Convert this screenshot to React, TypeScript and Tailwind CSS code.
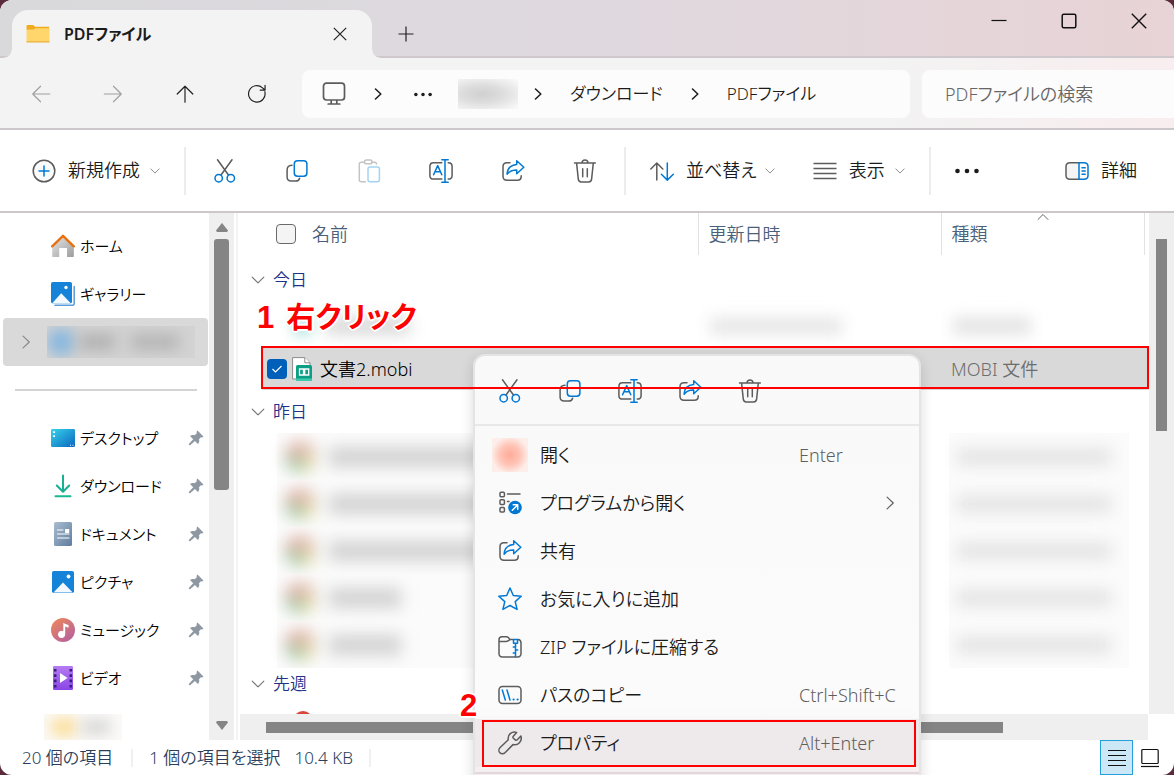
import React from "react";

type IconProps = { className?: string };

const GRAY = "#5c5c5c";
const BLUE = "#0078d4";

function Svg({ children, className = "size-6" }: { children: React.ReactNode; className?: string }) {
  return (
    <svg viewBox="0 0 24 24" fill="none" strokeWidth="1.5" strokeLinecap="round" strokeLinejoin="round" className={"shrink-0 " + className} aria-hidden="true">
      {children}
    </svg>
  );
}

function CutIcon() {
  return (
    <Svg>
      <path d="M4.5 .8 15.3 15.8M19 .8 8.2 15.8" stroke={GRAY} />
      <circle cx="5.7" cy="19.2" r="3.7" stroke={BLUE} />
      <circle cx="17.8" cy="19.2" r="3.7" stroke={BLUE} />
    </Svg>
  );
}

function CopyIcon() {
  return (
    <Svg>
      <path d="M7 6.3C3.6 6.5 2.1 8 2.1 11v7c0 2.8 1.6 4 4.2 4h4.5c2.2 0 3.3-.8 3.8-2.8" stroke={GRAY} />
      <rect x="9.3" y="1.8" width="12.6" height="15.4" rx="3.2" stroke={BLUE} />
    </Svg>
  );
}

function PasteIcon() {
  return (
    <Svg>
      <path d="M7.5 3.2H4.3c-1.3 0-2 .7-2 2v15.6c0 1.2.7 2 2 2h4.2M15 3.2h2.6c1.2 0 1.8.6 1.9 1.8" stroke="#c4c4c4" />
      <rect x="7.5" y="1" width="7.5" height="3.8" rx="1.9" stroke="#c4c4c4" />
      <rect x="11" y="8" width="11.4" height="14.8" rx="2" stroke="#a3d3f2" />
    </Svg>
  );
}

function RenameIcon() {
  return (
    <Svg>
      <path d="M12.8 3.7H4.6C2 3.7.9 5 .9 7.4v9c0 2.4 1.2 3.7 3.7 3.7h8.2M19.2 3.7c2.7 0 3.9 1.3 3.9 3.7v9c0 2.4-1.2 3.7-3.9 3.7" stroke={GRAY} />
      <path d="M4.6 15.8 8.7 6.6l4.1 9.2M6 12.8h5.4M16 1v22M12.8.8h6.4M12.8 23.2h6.4" stroke={BLUE} />
    </Svg>
  );
}

function ShareIcon() {
  return (
    <Svg>
      <path d="M9 3.7H6c-2.6 0-4 1.3-4 3.9v9.6c0 2.6 1.4 4 4 4h10.3c2.5 0 3.8-1.4 3.9-3.6v-.9" stroke={GRAY} />
      <path d="M15.7 1.8 22.8 8.3l-7.1 6.4V11c-4.4-.2-7.2 1-9.6 4.2C6.4 9.5 9.6 6 15.7 5.5Z" stroke={BLUE} />
    </Svg>
  );
}

function TrashIcon() {
  return (
    <Svg>
      <path d="M1.5 4h20.8M3.6 4.2l1.7 16c.2 1.7 1.2 2.7 2.9 2.7h7.5c1.7 0 2.7-1 2.9-2.7l1.7-16M9 3.8c.1-1.9 1.3-2.9 3-2.9s2.9 1 3 2.9M9.7 9.7v8M14.3 9.7v8" stroke={GRAY} />
    </Svg>
  );
}

function Chevron({ dir, className = "h-3 w-3" }: IconProps & { dir: "down" | "right" | "up" }) {
  const d = dir === "down" ? "M1 3.5 6 8.5l5-5" : dir === "right" ? "M3.5 1 8.8 6l-5.3 5" : "M1 8.5 6 3.5l5 5";
  return (
    <svg viewBox="0 0 12 12" fill="none" stroke="currentColor" strokeLinecap="round" strokeLinejoin="round" className={"shrink-0 " + className} aria-hidden="true">
      <path d={d} />
    </svg>
  );
}

function PlusCircleIcon() {
  return (
    <Svg>
      <circle cx="12" cy="12" r="10.8" stroke={GRAY} fill="#fafafa" />
      <path d="M12 7v10M7 12h10" stroke={BLUE} />
    </Svg>
  );
}

function SortIcon() {
  return (
    <Svg>
      <path d="M6.8 21V4.2M.8 10l6-6 6 6" stroke={GRAY} />
      <path d="M17.3 4v17M11.4 15.2l5.9 5.9 6-5.9" stroke={BLUE} />
    </Svg>
  );
}

function LinesIcon() {
  return (
    <Svg>
      <path d="M.5 4.5h23M.5 9.5h23M.5 14.5h23M.5 19.5h23" stroke={GRAY} strokeLinecap="butt" />
    </Svg>
  );
}

function DetailsIcon() {
  return (
    <Svg>
      <path d="M14 3.8H5C2.3 3.8 1 5.1 1 7.6v9c0 2.5 1.3 3.7 4 3.7h9" stroke={GRAY} fill="#f5f5f5" />
      <path d="M14 3.8h5c2.7 0 4 1.3 4 3.8v9c0 2.5-1.3 3.7-4 3.7h-5ZM17 8.8h3.2M17 12h3.2M17 15.3h3.2" stroke={BLUE} />
    </Svg>
  );
}

function OpenWithIcon() {
  return (
    <Svg>
      <path d="M9.5 3h12.5M9.5 10.5h1.5" stroke={GRAY} />
      <rect x="2" y="1.2" width="4.4" height="4.6" rx="1" stroke={GRAY} />
      <rect x="2" y="8.8" width="4.4" height="4.6" rx="1" stroke={GRAY} />
      <rect x="2" y="16.4" width="4.4" height="4.6" rx="1" stroke={GRAY} />
      <circle cx="17" cy="16.5" r="6.8" fill={BLUE} />
      <path d="m14.3 19.2 5-5M15.2 13.8h4.5v4.5" stroke="#fff" />
    </Svg>
  );
}

function StarIcon() {
  return (
    <Svg>
      <path d="m12 1 3.3 7.5 7.9.8-6 5.3 1.9 7.8L12 18.5l-7.1 3.9 1.9-7.8-6-5.3 7.9-.8Z" stroke={BLUE} />
    </Svg>
  );
}

function ZipIcon() {
  return (
    <Svg>
      <path d="M15 4.5h-3L10 2.3C9.6 2 9 1.8 8.5 1.8H4C2 1.8 1 2.9 1 4.8v13.7c0 2.2 1.2 3.4 3.4 3.4h15.2c2.2 0 3.4-1.2 3.4-3.4V8c0-2-1-3.4-3-3.5M1.3 6.5h7c1.5 0 2-.5 3.7-2" stroke={GRAY} />
      <path d="M15.5 4.6h4v3.6h-4ZM17.5 8.2v13.5M15.3 12h2.2M17.5 15h2.2M15.3 18h2.2" stroke={BLUE} />
    </Svg>
  );
}

function PathCopyIcon() {
  return (
    <Svg>
      <rect x="1" y="3.5" width="22" height="17" rx="3.5" stroke={GRAY} />
      <path d="M4.3 7l3 10M9 7l3 10" stroke={BLUE} />
      <path d="M15.5 16.5h.2M19.5 16.5h.2" stroke={BLUE} strokeWidth="2" />
    </Svg>
  );
}

function WrenchIcon() {
  return (
    <Svg>
      <path d="M18.6 1.5C13.9-.1 9.3 3.8 10.3 8.8L1.9 16.7c-1.3 1.4-1.3 3.7 0 5 1.4 1.4 3.7 1.4 5.1 0l8-8.1c5 1.2 9.6-3.3 7.9-8.6l-3.6 3.7c-.6.6-1.4.7-2 .2l-1.9-1.6c-.7-.6-.7-1.5-.1-2.1Z" stroke={GRAY} />
    </Svg>
  );
}

function FolderIcon() {
  return (
    <svg viewBox="0 0 24 18" className="h-[18px] w-6 shrink-0" aria-hidden="true">
      <path d="M1.5 0h5.7L9 1.8h14v3H.5V1.5C.5.6.9 0 1.5 0Z" fill="#f2ab1c" />
      <path d="M.5 5h6.8l2-1.7H23.5V17H.5Z" fill="#ffd66b" />
      <path d="M.5 16.2h23V17.5H.5Z" fill="#eab23a" />
    </svg>
  );
}

function MonitorIcon() {
  return (
    <Svg>
      <path d="M4.5 1.2h15c2 0 3 1.1 3 3V15c0 2-1 3-3 3h-15c-2 0-3-1-3-3V4.2c0-1.9 1-3 3-3ZM9.2 18.2v3.6M14.8 18.2v3.6M6.2 22h11.6" stroke={GRAY} strokeWidth="1.7" />
    </Svg>
  );
}

function HomeIcon() {
  return (
    <Svg>
      <defs>
        <linearGradient id="wall" x1="0" y1="0" x2="1" y2="1">
          <stop stopColor="#e6e6e6" />
          <stop offset="1" stopColor="#9c9c9c" />
        </linearGradient>
      </defs>
      <path d="M12 2.5 22.8 12v10.5c0 .3-.3.5-.5.5H16v-9H8.2v9H1.7c-.3 0-.5-.2-.5-.5V12Z" fill="url(#wall)" />
      <path d="M1.2 12.3 12 1.8l10.8 10.5" stroke="#e8700f" strokeWidth="2.4" />
    </Svg>
  );
}

function GalleryIcon() {
  return (
    <Svg>
      <path d="M4 23.3h17.5c1 0 1.7-.8 1.7-1.7V4.5" stroke="#5b9bd8" strokeWidth="1.5" />
      <rect x="0" y="0" width="21" height="21.5" rx="1.8" fill="#1583d8" />
      <path d="m1 21.5 9.2-10.3L20 21.5Z" fill="#f4f9ff" />
      <circle cx="15" cy="5.5" r="1.7" fill="#fff" />
    </Svg>
  );
}

function DesktopIcon() {
  return (
    <Svg>
      <defs>
        <linearGradient id="desk" x1="0" y1="0" x2="1" y2="1">
          <stop stopColor="#37d3ea" />
          <stop offset="1" stopColor="#0a66c0" />
        </linearGradient>
      </defs>
      <rect x="0" y="3" width="24" height="18" rx="1.2" fill="url(#desk)" />
      <path d="M2.2 5.2h1.8V7H2.2ZM2.2 9.2h1.8V11H2.2ZM19 18.8h1v1h-1ZM21.5 18.8h1v1h-1Z" fill="#fff" />
    </Svg>
  );
}

function DownloadIcon() {
  return (
    <Svg>
      <path d="M12 1.5v15.8M5.8 11.5l6.2 6.2 6.2-6.2" stroke="#1aae92" strokeWidth="2" />
      <path d="M4.5 22.3h15" stroke="#19b890" strokeWidth="2" />
    </Svg>
  );
}

function DocumentIcon() {
  return (
    <Svg>
      <defs>
        <linearGradient id="doc" x1="0" y1="0" x2="1" y2="1">
          <stop stopColor="#a9bdd0" />
          <stop offset="1" stopColor="#5f7d9e" />
        </linearGradient>
      </defs>
      <rect x="3" y="0" width="18" height="24" rx="1.5" fill="url(#doc)" />
      <path d="M6.5 8h5.5M6.5 12h11.5M6.5 16h11.5" stroke="#fff" strokeWidth="1.2" />
      <rect x="14" y="7" width="4.2" height="4" fill="#fff" />
    </Svg>
  );
}

function PictureIcon() {
  return (
    <Svg>
      <rect x="1" y="1" width="22" height="22" rx="1.8" fill="#1583d8" />
      <path d="M2.5 22.5 12 12.5l9.7 10Z" fill="#f4f9ff" />
      <circle cx="17.5" cy="6.5" r="1.9" fill="#fff" />
    </Svg>
  );
}

function MusicIcon() {
  return (
    <Svg>
      <defs>
        <linearGradient id="music" x1="0" y1="0" x2=".8" y2="1">
          <stop stopColor="#f08a55" />
          <stop offset="1" stopColor="#b561a0" />
        </linearGradient>
      </defs>
      <circle cx="12" cy="12" r="12" fill="url(#music)" />
      <path d="M12.3 4.7c1.5 1.4 3 1.2 5.2 2.2v2.9l-3.3-1.2v7.9a3.6 3.6 0 1 1-1.9-3.3V4.7Z" fill="#fff" />
    </Svg>
  );
}

function VideoIcon() {
  return (
    <Svg>
      <defs>
        <linearGradient id="video" x1="0" y1="0" x2="0" y2="1">
          <stop stopColor="#b57bf2" />
          <stop offset="1" stopColor="#8a46e6" />
        </linearGradient>
      </defs>
      <rect x="2" y="0" width="20" height="24" rx="1.2" fill="url(#video)" />
      <path d="M4.2 3v19M19.8 3v19" stroke="#3b1d7a" strokeWidth="2.6" strokeDasharray="2.6 2.7" strokeLinecap="butt" />
      <path d="m9 7 7.5 5-7.5 5Z" fill="#fff" />
    </Svg>
  );
}

function PinIcon() {
  return (
    <svg viewBox="0 0 16 16" className="size-4 shrink-0" aria-hidden="true">
      <path d="M9.500 .6 15.400 6.500c-.7.900-1.600 1.100-2.500.8L11 9.300c.6 1.800.2 3.500-1 4.600L6.900 10.900 1.800 15.500.6 14.300 5.200 9.300 2 6.100C3.200 4.900 5 4.600 6.700 5.200L8.800 3.200C8.500 2.200 8.700 1.300 9.500.6Z" fill="#8d98a3" />
    </svg>
  );
}

function MobiFileIcon() {
  return (
    <svg viewBox="0 0 20 24" className="h-6 w-5 shrink-0" aria-hidden="true">
      <path d="M.6.6h12.2L18 5.8V22H.6Z" fill="#fff" stroke="#8a8a8a" />
      <path d="M12.8.6V5.8H18" fill="#fff" stroke="#8a8a8a" />
      <rect x="4" y="8" width="16" height="16" rx="1.5" fill="#0d9f86" />
      <path d="M4 21.5h16V22.5c0 .9-.6 1.5-1.5 1.5h-13C4.6 24 4 23.4 4 22.5Z" fill="#3cc9ab" />
      <path d="M7.5 12h4v6h-4ZM12.7 12h4v6h-4Z" fill="none" stroke="#fff" strokeWidth="1.3" />
    </svg>
  );
}

function Dots({ className }: IconProps) {
  return (
    <svg viewBox="0 0 24 6" fill="currentColor" className={"shrink-0 " + className} aria-hidden="true">
      <circle cx="2.5" cy="3" r="2.3" />
      <circle cx="12" cy="3" r="2.3" />
      <circle cx="21.5" cy="3" r="2.3" />
    </svg>
  );
}

function TitleBar() {
  return (
    <header className="flex h-[58px] shrink-0 justify-between border-b-2 border-[#cec8cd] bg-linear-to-r from-[#d9d9dc] via-[#dfd9df] to-[#e8d3d6] pl-3">
      <div className="flex">
        <div className="relative mt-2.5 flex h-12 w-[360px] items-center self-start rounded-t-2xl bg-[#f3f3f3] pr-6 pl-3.5">
          <span className="absolute bottom-0 -left-2 size-2 bg-[radial-gradient(circle_at_0_0,transparent_7px,#f3f3f3_8px)]" />
          <span className="absolute -right-2 bottom-0 size-2 bg-[radial-gradient(circle_at_100%_0,transparent_7px,#f3f3f3_8px)]" />
          <FolderIcon />
          <h1 className="ml-3.5 flex-1 text-[16px] font-semibold">PDFファイル</h1>
          <button aria-label="タブを閉じる" className="flex size-4 items-center justify-center">
            <svg viewBox="0 0 14 14" className="size-3.5" stroke="#222" strokeWidth="1.2"><path d="M.8.8 13.2 13.2M13.2.8.8 13.2" /></svg>
          </button>
        </div>
        <button aria-label="新しいタブ" className="ml-3 flex w-11 items-center justify-center pt-3">
          <svg viewBox="0 0 16 16" className="size-4" stroke="#222" strokeWidth="1.2"><path d="M8 .5v15M.5 8h15" /></svg>
        </button>
      </div>
      <div className="flex h-[42px]">
        <button aria-label="最小化" className="flex w-[70px] items-center justify-center">
          <svg viewBox="0 0 16 16" className="size-4" stroke="#111" strokeWidth="1.2"><path d="M.5 7.5h15" /></svg>
        </button>
        <button aria-label="最大化" className="flex w-[70px] items-center justify-center">
          <svg viewBox="0 0 16 16" className="size-4" fill="none" stroke="#111" strokeWidth="1.5"><rect x="1.2" y="1.2" width="13.6" height="13.6" rx="1.5" /></svg>
        </button>
        <button aria-label="閉じる" className="flex w-[70px] items-center justify-center">
          <svg viewBox="0 0 16 16" className="size-4" stroke="#111" strokeWidth="1.4"><path d="M.8.8 15.2 15.2M15.2.8.8 15.2" /></svg>
        </button>
      </div>
    </header>
  );
}

const navButtons = [
  { label: "戻る", color: "text-[#a0a0a0]", d: "M21.5 12H3M11.5 3.5 3 12l8.5 8.5" },
  { label: "進む", color: "text-[#a0a0a0]", d: "M2.5 12H21M12.5 3.5 21 12l-8.5 8.5" },
  { label: "上へ", color: "text-[#222]", d: "M12 21V3.5M3.5 12 12 3.5l8.5 8.5" },
  { label: "更新", color: "text-[#222]", d: "M20.5 9.5A9 9 0 1 1 18 5.3l2.6 2.4M20.8 2.5v5.3h-5.3" },
];

function NavBar() {
  return (
    <nav className="flex h-[72px] shrink-0 items-center border-b-2 border-[#cbc7ca] bg-linear-to-r from-[#f3f3f3] from-75% to-[#f8edef] pt-0.5 pl-[5px]">
      {navButtons.map((b) => (
        <button key={b.label} aria-label={b.label} className={"flex h-12 w-[72px] items-center justify-center " + b.color}>
          <svg viewBox="0 0 24 24" className="size-[22px]" fill="none" stroke="currentColor" strokeWidth="1.3" strokeLinejoin="round" strokeLinecap="round"><path d={b.d} /></svg>
        </button>
      ))}
      <div className="ml-[9px] flex h-12 flex-1 items-center gap-[26px] rounded-lg bg-[#fcfcfc] pl-5 text-[17px]">
        <MonitorIcon />
        <Chevron dir="right" className="size-3 stroke-[1.5]" />
        <Dots className="ml-1 h-[5px] w-[18px]" />
        <span className="h-[30px] w-[60px] bg-[radial-gradient(ellipse_at_40%_50%,#d0d0d0,#dddddd_40%,#f9f9f9_95%)]" />
        <Chevron dir="right" className="-ml-3 size-3 stroke-[1.5]" />
        <a href="#downloads">ダウンロード</a>
        <Chevron dir="right" className="size-3 stroke-[1.5]" />
        <a href="#pdf">PDFファイル</a>
      </div>
      <input type="search" aria-label="検索" placeholder="PDFファイルの検索" className="ml-3 h-12 w-[252px] rounded-l-lg bg-[#fcfcfc] pl-[23px] text-[18px] outline-none placeholder:text-[#666]" />
    </nav>
  );
}

const actions = [
  { label: "切り取り", Icon: CutIcon },
  { label: "コピー", Icon: CopyIcon },
  { label: "貼り付け", Icon: PasteIcon },
  { label: "名前の変更", Icon: RenameIcon },
  { label: "共有", Icon: ShareIcon },
  { label: "削除", Icon: TrashIcon },
];

function Toolbar() {
  return (
    <div className="flex h-[83px] shrink-0 items-center border-b-2 border-[#cbc7ca] bg-white pl-8 text-[18px]">
      <button className="flex items-center gap-3">
        <PlusCircleIcon />
        新規作成
        <Chevron dir="down" className="-ml-0.5 size-2.5 text-[#777]" />
      </button>
      <span className="ml-6 h-12 w-0.5 bg-[#ececec]" />
      <div className="ml-[3px] flex">
        {actions.map(({ label, Icon }) => (
          <button key={label} aria-label={label} className="flex h-12 w-[72px] items-center justify-center">
            <Icon />
          </button>
        ))}
      </div>
      <span className="ml-[3px] h-12 w-0.5 bg-[#ececec]" />
      <button className="ml-6 flex items-center gap-3">
        <SortIcon />
        並べ替え
        <Chevron dir="down" className="-ml-1 size-2.5 text-[#777]" />
      </button>
      <button className="ml-[38px] flex items-center gap-3">
        <LinesIcon />
        表示
        <Chevron dir="down" className="-ml-0.5 size-2.5 text-[#777]" />
      </button>
      <span className="ml-6 h-12 w-0.5 bg-[#ececec]" />
      <button aria-label="その他" className="ml-6 flex h-12 items-center">
        <Dots className="h-1.5 w-6" />
      </button>
      <button className="mr-[37px] ml-auto flex items-center gap-3">
        <DetailsIcon />
        詳細
      </button>
    </div>
  );
}

const pinned = [
  { label: "デスクトップ", Icon: DesktopIcon },
  { label: "ダウンロード", Icon: DownloadIcon },
  { label: "ドキュメント", Icon: DocumentIcon },
  { label: "ピクチャ", Icon: PictureIcon },
  { label: "ミュージック", Icon: MusicIcon },
  { label: "ビデオ", Icon: VideoIcon },
];

function Sidebar() {
  return (
    <aside className="flex w-[238px] shrink-0 border-r-2 border-[#f3f3f3] text-[15px] text-black">
      <div className="flex flex-1 flex-col overflow-hidden pt-[9px]">
        <a href="#home" className="flex h-12 shrink-0 items-center gap-[5px] pl-[51px]">
          <HomeIcon />
          ホーム
        </a>
        <a href="#gallery" className="flex h-12 shrink-0 items-center gap-[5px] pl-[51px]">
          <GalleryIcon />
          ギャラリー
        </a>
        <button aria-label="個人用フォルダー" className="mr-px ml-[3px] flex h-12 shrink-0 items-center rounded-sm bg-[#d9d9d9] pl-4">
          <Chevron dir="right" className="size-3.5 text-[#888]" />
          <span className="ml-3.5 flex h-8 w-[148px] items-center overflow-hidden bg-[#d3d3d3]">
            <span className="size-7 rounded-full bg-[#8ab8de] blur-[7px]" />
            <span className="ml-1 h-4 w-9 bg-[#b2b2b2] blur-[7px]" />
            <span className="ml-4 h-4 w-12 bg-[#b6b6b6] blur-[7px]" />
          </span>
        </button>
        <div className="flex h-12 shrink-0 items-center pr-3 pl-[15px]">
          <hr className="h-0.5 flex-1 border-0 bg-[#d4d4d4]" />
        </div>
        {pinned.map(({ label, Icon }) => (
          <a key={label} href="#pinned" className="flex h-12 shrink-0 items-center gap-[5px] pr-[5px] pl-[51px]">
            <Icon />
            <span className="flex-1 whitespace-nowrap">{label}</span>
            <PinIcon />
          </a>
        ))}
        <div className="mt-3 ml-11 flex h-[26px] w-[78px] shrink-0 items-center overflow-hidden bg-[#fbfaf8]">
          <span className="ml-1.5 h-5 w-7 rounded-full bg-[#fbe0a0] blur-[7px]" />
          <span className="ml-1 h-4 w-7 bg-[#d9d9d9] blur-[7px]" />
        </div>
      </div>
      <div className="flex w-[25px] flex-col items-center justify-between bg-[#efefef] py-2.5" aria-hidden="true">
        <svg viewBox="0 0 12 9" className="h-[9px] w-3 shrink-0" fill="#858585"><path d="M6 0 12 7.5 11 9H1L0 7.5Z" /></svg>
        <span className="mt-[7px] h-[251px] w-[15px] rounded-[3px] bg-[#858585]" />
        <span className="flex-1" />
        <svg viewBox="0 0 12 9" className="h-[9px] w-3 shrink-0" fill="#858585"><path d="M6 9 12 1.5 11 0H1L0 1.5Z" /></svg>
      </div>
      <span className="w-0.5" />
    </aside>
  );
}

function GroupRow({ label, height }: { label: string; height: string }) {
  return (
    <tr className={height}>
      <td colSpan={5} className="p-0 pl-[13px]">
        <button className="flex items-center gap-2 text-[17px] leading-6 text-[#1e3287]">
          <Chevron dir="down" className="size-3.5 text-[#777]" />
          {label}
        </button>
      </td>
    </tr>
  );
}

function HiddenRow({ wide }: { wide: boolean }) {
  return (
    <tr className="h-[47px]">
      <td className="p-0" />
      <td className="overflow-hidden p-0">
        <div className="ml-[15px] flex h-[47px] items-center bg-[#fbfbfb] pl-2">
          <span className="size-8 shrink-0 rounded-full bg-[conic-gradient(#e3c3b2_0_25%,#dfdcae_25%_50%,#a3c8a6_50%_75%,#dbada1_75%)] blur-[8px]" />
          <span className={"ml-3 h-5 shrink-0 bg-[#d2d2d2] blur-[8px] " + (wide ? "w-[160px]" : "w-[72px]")} />
        </div>
      </td>
      <td className="p-0" />
      <td colSpan={2} className="p-0">
        <div className="ml-2 flex h-[47px] w-[180px] items-center bg-[#fbfbfb] pl-2">
          <span className="h-4 w-[154px] bg-[#e2e2e2] blur-[8px]" />
        </div>
      </td>
    </tr>
  );
}

function FileList() {
  return (
    <main className="flex min-w-0 flex-1 flex-col">
      <div className="flex min-h-0 flex-1">
        <div className="min-w-0 flex-1 overflow-hidden">
          <table className="w-full table-fixed border-collapse text-[18px] leading-6">
            <colgroup>
              <col className="w-6" />
              <col />
              <col className="w-[243px]" />
              <col className="w-[203px]" />
              <col className="w-[5px]" />
            </colgroup>
            <thead className="text-left text-[#4a5f7a]">
              <tr className="h-[42px]">
                <th className="p-0" />
                <th className="border-r border-[#e2e2e2] p-0 font-[350]">
                  <label className="flex items-center gap-4 pl-3.5">
                    <input type="checkbox" className="size-5 appearance-none rounded border border-[#6a6a6a] bg-[#f4f4f4]" />
                    名前
                  </label>
                </th>
                <th className="border-r border-[#e2e2e2] p-0 pl-2.5 font-[350]">更新日時</th>
                <th className="relative border-r border-[#e2e2e2] p-0 pl-2.5 font-[350]">
                  <Chevron dir="up" className="absolute -top-0.5 left-1/2 size-3 -translate-x-1/2 text-[#666]" />
                  種類
                </th>
                <th className="p-0" />
              </tr>
            </thead>
            <tbody>
              <GroupRow label="今日" height="h-[50px]" />
              <tr className="h-[42px]">
                <td />
                <td className="p-0">
                  <div className="flex items-center pl-7">
                    <span className="size-6 rounded-full bg-[#c4ebe6] blur-[6px]" />
                    <span className="ml-3 h-4 w-[84px] bg-[#d6d6d6] blur-[8px]" />
                  </div>
                </td>
                <td className="p-0 pl-3">
                  <div className="h-4 w-[132px] bg-[#e4e4e4] blur-[8px]" />
                </td>
                <td className="p-0 pl-3">
                  <div className="h-4 w-[78px] bg-[#e0e0e0] blur-[8px]" />
                </td>
                <td />
              </tr>
              <tr className="h-[43px]">
                <td />
                <td className="bg-[#d9d9d9] p-0">
                  <label className="flex items-center pl-[5px] text-black">
                    <span className="grid size-5 shrink-0 place-items-center">
                      <input type="checkbox" defaultChecked className="col-start-1 row-start-1 size-5 appearance-none rounded bg-[#005fb8]" />
                      <svg viewBox="0 0 12 12" className="pointer-events-none col-start-1 row-start-1 size-3" fill="none" stroke="#fff" strokeWidth="1.2"><path d="M1.5 6 4.5 9l6-6" /></svg>
                    </span>
                    <span className="ml-[5px]"><MobiFileIcon /></span>
                    <span className="ml-2">文書2.mobi</span>
                  </label>
                </td>
                <td className="bg-[#d9d9d9]" />
                <td colSpan={2} className="bg-[#d9d9d9] p-0 pl-2.5 text-[#6d6d6d]">MOBI 文件</td>
              </tr>
              <GroupRow label="昨日" height="h-[43px]" />
              <HiddenRow wide />
              <HiddenRow wide />
              <HiddenRow wide />
              <HiddenRow wide={false} />
              <HiddenRow wide={false} />
              <GroupRow label="先週" height="h-[31px]" />
              <tr>
                <td />
                <td colSpan={4} className="p-0 pt-3 pl-[31px]">
                  <div className="size-5 rounded-full border-4 border-[#d9463a]" />
                </td>
              </tr>
            </tbody>
          </table>
        </div>
        <div className="flex w-[25px] shrink-0 flex-col bg-[#efefef] pt-[26px] pl-[7px]" aria-hidden="true">
          <span className="h-[192px] w-[11px] bg-[#858585]" />
        </div>
      </div>
      <div className="mr-[26px] ml-0.5 flex h-[26px] shrink-0 items-center bg-[#efefef] pr-[145px] pl-[26px]" aria-hidden="true">
        <span className="h-[11px] flex-1 bg-[#858585]" />
      </div>
    </main>
  );
}

function StatusBar() {
  return (
    <footer className="flex h-[35px] shrink-0 items-center pl-[22px] text-[17px] text-[#2b3f5c]">
      <span>20 個の項目</span>
      <span className="mr-4 ml-[18px] h-[18px] w-0.5 bg-[#f0f0f0]" />
      <span>1 個の項目を選択</span>
      <span className="ml-3.5">10.4 KB</span>
      <span className="ml-4 h-[18px] w-0.5 bg-[#f0f0f0]" />
      <button aria-label="詳細表示" className="ml-auto flex h-full w-[33px] items-center justify-center border border-[#26a0da] bg-[#cce8f6]">
        <svg viewBox="0 0 18 18" className="size-[18px]" stroke="#111" strokeWidth="1.2"><path d="M0 1.5h18M0 6.5h18M0 11.5h18M0 16.5h18" /></svg>
      </button>
      <button aria-label="大アイコン表示" className="mr-[15px] ml-2 flex items-center">
        <svg viewBox="0 0 18 20" className="h-5 w-[18px]" fill="none" stroke="#111" strokeWidth="1.2"><rect x=".8" y="1.5" width="16.4" height="14" rx="1" /><path d="M0 18.5h18" /></svg>
      </button>
    </footer>
  );
}

const menuActions = actions.filter((a) => a.label !== "貼り付け");

function OpenAppIcon() {
  return <span className="-mx-1.5 block h-[34px] w-9 bg-[radial-gradient(circle,#ffab99,#ffc4b6_40%,#fdeeea_75%)]" />;
}

const menuItems = [
  { label: "開く", Icon: OpenAppIcon, hint: "Enter" },
  { label: "プログラムから開く", Icon: OpenWithIcon, submenu: true },
  { label: "共有", Icon: ShareIcon },
  { label: "お気に入りに追加", Icon: StarIcon },
  { label: "ZIP ファイルに圧縮する", Icon: ZipIcon },
  { label: "パスのコピー", Icon: PathCopyIcon, hint: "Ctrl+Shift+C" },
  { label: "プロパティ", Icon: WrenchIcon, hint: "Alt+Enter" },
];

function ContextMenu() {
  return (
    <div role="menu" className="absolute top-[354px] left-[473px] w-[448px] rounded-t-xl border-2 border-[#e4e4e4] bg-linear-to-b from-[#f9f9f9] via-[#fbfbfb] via-80% to-[#f3e9ec] shadow-[0_4px_14px_rgba(0,0,0,0.14)]">
      <div className="flex h-[70px] items-center border-b-2 border-[#e8e8e8] pt-0.5 pl-[5px]">
        {menuActions.map(({ label, Icon }) => (
          <button key={label} role="menuitem" aria-label={label} className="flex h-12 w-[60px] items-center justify-center">
            <Icon />
          </button>
        ))}
      </div>
      <div className="py-[5px]">
        {menuItems.map(({ label, Icon, hint, submenu }) => (
          <button key={label} role="menuitem" className={"grid h-12 w-full grid-cols-[24px_1fr_120px] items-center gap-[18px] pl-[23px] text-left text-[18px] " + (label === "プロパティ" ? "bg-[#eee9eb]" : "")}>
            <Icon />
            <span className="whitespace-nowrap">{label}</span>
            <span className="text-[#5f5f5f]">
              {hint}
              {submenu && <Chevron dir="right" className="mr-[22px] ml-auto size-3.5" />}
            </span>
          </button>
        ))}
      </div>
      <div className="h-6 border-t-2 border-[#e2d8dc]" />
    </div>
  );
}

function Annotations() {
  const outline = "[text-shadow:2px_0_#fff,-2px_0_#fff,0_2px_#fff,0_-2px_#fff,1px_1px_#fff,-1px_-1px_#fff,1px_-1px_#fff,-1px_1px_#fff]";
  return (
    <div className={"pointer-events-none text-[31px] leading-9 font-bold text-[#fe0000] font-['Liberation_Sans','Noto_Sans_CJK_JP',sans-serif] " + outline}>
      <p className="absolute top-[300px] left-[257px] flex items-baseline gap-3 whitespace-nowrap">
        1<span className="text-[29px]">右クリック</span>
      </p>
      <div className="absolute top-[346px] right-[25px] left-[261px] h-[43px] border-2 border-[#fe0000]" />
      <p className="absolute top-[688px] left-[460px]">2</p>
      <div className="absolute top-[720px] left-[482px] h-[47px] w-[434px] border-2 border-[#fe0000]" />
    </div>
  );
}

export default function App() {
  return (
    <div className="h-screen bg-[#5b2b3c]">
      <div className="relative flex h-full flex-col overflow-hidden rounded-xl bg-white font-['Noto_Sans','Noto_Sans_CJK_JP',sans-serif] font-[350] text-[#1b1b1b] [font-feature-settings:'palt']">
        <TitleBar />
        <NavBar />
        <Toolbar />
        <div className="flex min-h-0 flex-1">
          <Sidebar />
          <FileList />
        </div>
        <StatusBar />
        <ContextMenu />
        <Annotations />
      </div>
    </div>
  );
}
